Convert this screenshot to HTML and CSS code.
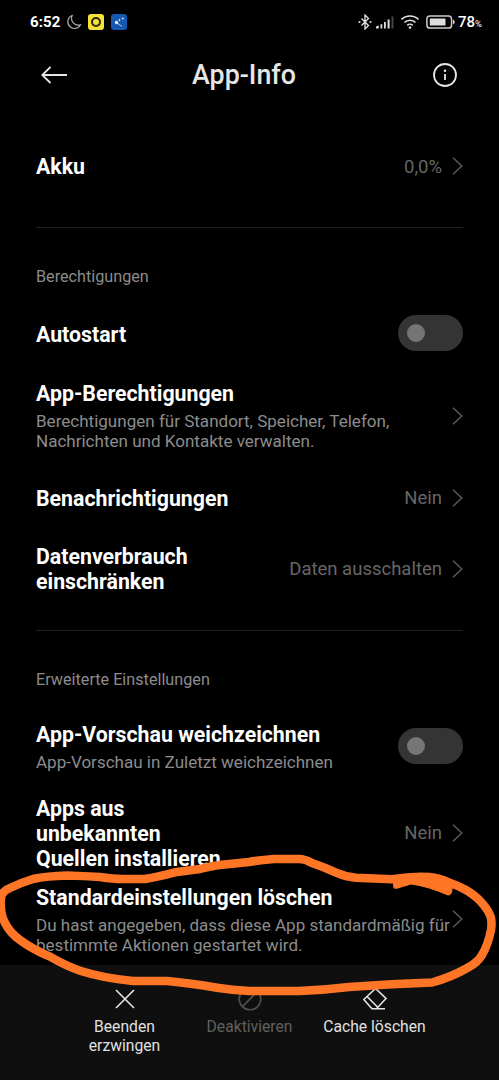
FILE: index.html
```
<!DOCTYPE html>
<html lang="de">
<head>
    <meta charset="UTF-8">
    <meta name="viewport" content="width=device-width, initial-scale=1.0">
    <title>App-Info</title>
    <link rel="stylesheet" href="styles.css">
</head>
<body>
    <div class="screen">
        <div class="status-bar">
            <span class="time">6:52</span>
            <svg class="moon" width="16" height="16" viewBox="0 0 16 16"><path d="M6.200 1.500A6.700 6.700 0 1 0 14.500 10.800 6.800 6.800 0 0 1 6.200 1.500Z"/></svg>
            <span class="app-badge yellow"></span>
            <span class="app-badge blue">
                <svg width="16" height="16" viewBox="0 0 16 16"><circle cx="5.500" cy="8.500" r="1.300"/><circle cx="8.500" cy="6" r=".6"/><circle cx="11.800" cy="4.500" r=".6"/><path d="M6 9l5 3.500"/></svg>
            </span>
            <div class="status-right">
                <svg class="line" width="14" height="16" viewBox="0 0 14 16"><path d="M3.500 4.500l7 7L7 15V1l3.500 3.500-7 7"/><circle class="fill" cx="1.500" cy="8" r="1.100"/><circle class="fill" cx="12.500" cy="8" r="1.100"/></svg>
                <svg class="signal" width="18" height="14" viewBox="0 0 18 14"><path d="M0 11.500l2.800-1v3H0zM4.500 9.200h1.800v4.300H4.500zM8 7h1.800v6.500H8zM11.600 4.500h2v9h-2z"/><path class="off" d="M15.500 1.500h2v12h-2z"/></svg>
                <svg class="line wifi" width="20" height="16" viewBox="0 0 20 16"><path d="M1.500 5.500a12 12 0 0 1 17 0M4.500 8.500a7.800 7.800 0 0 1 11 0M7.300 11.300a3.900 3.900 0 0 1 5.400 0"/><circle class="fill" cx="10" cy="13.600" r="1.300"/></svg>
                <svg class="battery" width="29" height="14" viewBox="0 0 29 14"><rect class="shell" x=".9" y=".9" width="24.700" height="12.200" rx="3.200"/><rect x="3.800" y="3.600" width="15.700" height="6.800" rx=".5"/><path d="M27 4.800q1.700.3 1.700 2.200T27 9.200z"/></svg>
                <span class="percent">78<small>%</small></span>
            </div>
        </div>

        <header class="header">
            <svg class="back" width="26" height="18" viewBox="0 0 26 18"><path d="M9.500 1L1.200 9l8.300 8M1.200 9H26"/></svg>
            <h1>App-Info</h1>
            <svg class="info" width="24" height="24" viewBox="0 0 24 24"><circle cx="12" cy="12" r="11"/><path d="M12 11v6"/><circle class="dot" cx="12" cy="7.800" r="1.300"/></svg>
        </header>

        <main class="content">
            <div class="row battery-row">
                <h2>Akku</h2>
                <span class="value">0,0%</span>
                <svg class="chevron" width="11" height="18" viewBox="0 0 11 18"><path d="M1 .8L9.800 9 1 17.200"/></svg>
            </div>

            <section>
                <p class="label">Berechtigungen</p>
                <div class="row">
                    <h2>Autostart</h2>
                    <span class="toggle"></span>
                </div>
                <div class="row detail">
                    <div class="text">
                        <h2>App-Berechtigungen</h2>
                        <p>Berechtigungen für Standort, Speicher, Telefon,<br>Nachrichten und Kontakte verwalten.</p>
                    </div>
                    <svg class="chevron" width="11" height="18" viewBox="0 0 11 18"><path d="M1 .8L9.800 9 1 17.200"/></svg>
                </div>
                <div class="row">
                    <h2>Benachrichtigungen</h2>
                    <span class="value">Nein</span>
                    <svg class="chevron" width="11" height="18" viewBox="0 0 11 18"><path d="M1 .8L9.800 9 1 17.200"/></svg>
                </div>
                <div class="row data">
                    <h2>Datenverbrauch<br>einschränken</h2>
                    <span class="value">Daten ausschalten</span>
                    <svg class="chevron" width="11" height="18" viewBox="0 0 11 18"><path d="M1 .8L9.800 9 1 17.200"/></svg>
                </div>
            </section>

            <section>
                <p class="label">Erweiterte Einstellungen</p>
                <div class="row preview">
                    <div class="text">
                        <h2>App-Vorschau weichzeichnen</h2>
                        <p>App-Vorschau in Zuletzt weichzeichnen</p>
                    </div>
                    <span class="toggle"></span>
                </div>
                <div class="row sources">
                    <h2>Apps aus<br>unbekannten<br>Quellen installieren</h2>
                    <span class="value">Nein</span>
                    <svg class="chevron" width="11" height="18" viewBox="0 0 11 18"><path d="M1 .8L9.800 9 1 17.200"/></svg>
                </div>
                <div class="row defaults">
                    <div class="text">
                        <h2>Standardeinstellungen löschen</h2>
                        <p>Du hast angegeben, dass diese App standardmäßig für<br>bestimmte Aktionen gestartet wird.</p>
                    </div>
                    <svg class="chevron" width="11" height="18" viewBox="0 0 11 18"><path d="M1 .8L9.800 9 1 17.200"/></svg>
                </div>
            </section>
        </main>

        <nav class="actions">
            <div class="action">
                <svg width="24" height="24" viewBox="0 0 24 24"><path d="M3 3l18 18M21 3L3 21"/></svg>
                <span>Beenden<br>erzwingen</span>
            </div>
            <div class="action disabled">
                <svg width="24" height="24" viewBox="0 0 24 24"><circle cx="12" cy="12" r="10.800"/><path d="M4.400 19.600L19.600 4.400"/></svg>
                <span>Deaktivieren</span>
            </div>
            <div class="action">
                <svg width="24" height="24" viewBox="0 0 24 24"><path d="M12.500 1.500L23 11.500 13.500 21.700H9L.8 12.500zM4 9.500l11 11M8.500 21.700H22"/></svg>
                <span>Cache löschen</span>
            </div>
        </nav>

        <!-- hand-drawn marker -->
        <svg class="marker" width="499" height="1080" viewBox="0 0 499 1080">
            <path d="M10 888Q20 883 33 879Q47 876 67 875.500Q85 876 100 877Q113 879 123 879H145Q157 877 175 872.300L200 869Q212 866 220 865Q240 863 249 862Q260 860 274 859H299Q305 859 312 863Q324 867 336 872.700Q346 877 356 877.700L392 879.300Q412 876 429 877Q440 878 449 882.500Q459 886 466 890Q476 896 482 903Q489 911 491 918Q492 924 491 930Q488 945 482 955Q478 962 469 967Q452 977 432 982.500L392 984.300L349 987Q325 990 299 991H249Q232 990 217 987.700Q190 983 167 981H133Q103 978 80 970.700Q66 966 50 956.700Q32 949 20 940Q10 933 5 923Q1 915 1 908Q0 901 1.700 895Q4 890 10 888"/>
            <path class="blob" d="M393 880L394 888Q397 889 401 887L411 884Q427 886 448 895Q452 895 452 889L451 883L429 877Z"/>
        </svg>
    </div>
</body>
</html>
```
FILE: styles.css
```
*,
*::before {
    margin: 0;
    padding: 0;
    box-sizing: border-box;
}

body {
    background-color: #000;
    color: #fff;
    font-family: Roboto, 'Liberation Sans', sans-serif;
}

svg {
    display: block;
    flex-shrink: 0;
    fill: none;
    stroke: #e6e6e6;
    stroke-width: 1.6;
}

.screen {
    position: relative;
    width: 499px;
    height: 1080px;
    overflow: hidden;
    display: flex;
    flex-direction: column;
}

.status-bar {
    height: 43px;
    padding: 0 17px 0 30px;
    display: flex;
    align-items: center;
}

.time {
    width: 36px;
    font-size: 15px;
    font-weight: 700;
    letter-spacing: 0.1px;
}

.moon {
    stroke: #aaa;
    stroke-width: 1.2;
}

.app-badge {
    width: 16px;
    height: 16px;
    border-radius: 3px;
    margin-left: 6px;
}

.yellow {
    background-color: #f6e335;
    display: flex;
    align-items: center;
    justify-content: center;
}

.yellow::before {
    content: "";
    width: 10px;
    height: 10px;
    border: 2px solid #28230a;
    border-radius: 50%;
}

.blue {
    background-color: #1458b0;
    margin-left: 7px;
}

.blue svg {
    fill: #fff;
    stroke: #fff;
    stroke-width: 0.7;
}

.status-right {
    margin-left: auto;
    display: flex;
    align-items: center;
}

.line {
    stroke-width: 1.3;
}

.line .fill,
.signal,
.battery {
    fill: #ddd;
    stroke: none;
}

.signal {
    margin-left: 4px;
}

.signal .off {
    fill: #444;
}

.line.wifi {
    margin-left: 6px;
    stroke-width: 1.6;
}

.battery {
    margin-left: 6px;
}

.battery .shell {
    fill: none;
    stroke: #ccc;
    stroke-width: 1.5;
}

.percent {
    margin-left: 3px;
    font-size: 15px;
    font-weight: 500;
}

.percent small {
    font-size: 9.5px;
    font-weight: 400;
}

.header {
    height: 64px;
    padding: 0 42px 0 41px;
    display: flex;
    align-items: center;
}

.back,
.info {
    stroke-width: 1.8;
}

.info .dot {
    fill: #e6e6e6;
    stroke: none;
}

h1 {
    flex: 1;
    padding-right: 12px;
    font-size: 26.8px;
    font-weight: 500;
    text-align: center;
    color: #e6e6e6;
}

.content {
    flex: 1;
    padding: 0 35px 0 36px;
}

.row {
    height: 58px;
    display: flex;
    align-items: center;
}

.battery-row {
    height: 119px;
    padding-right: 1px;
}

.battery-row .chevron {
    margin-bottom: 2px;
}

section {
    border-top: 1px solid #1f1f1f;
    margin: 1px 1px 0 0;
}

.label {
    height: 77px;
    padding-top: 39px;
    font-size: 16.2px;
    line-height: 20px;
    color: #8c8c8c;
}

h2 {
    font-size: 21.3px;
    line-height: 25px;
    font-weight: 700;
}

.text p {
    margin-top: 5px;
    font-size: 17.05px;
    line-height: 20px;
    color: #8c8c8c;
    white-space: nowrap;
}

.text {
    width: 0;
    flex: 1;
}

.text h2 {
    white-space: nowrap;
}

.value {
    margin-left: auto;
    font-size: 18.5px;
    color: #666;
}

.chevron {
    margin: 0 0 1px 10px;
    stroke: #5c5c5c;
    stroke-width: 1.4;
}

.toggle {
    width: 65px;
    height: 36px;
    margin: 0 0 2px auto;
    padding-left: 9px;
    border-radius: 18px;
    background-color: #343434;
    display: flex;
    align-items: center;
}

.toggle::before {
    content: "";
    width: 18px;
    height: 18px;
    border-radius: 50%;
    background-color: #757575;
}

.detail {
    height: 106px;
}

.data {
    height: 84px;
    margin-bottom: 19px;
}

.preview {
    height: 78px;
}

.sources {
    height: 94px;
}

.defaults {
    height: 79px;
}

.defaults .chevron {
    margin-bottom: 2px;
}

.actions {
    height: 115px;
    padding: 22px 62px 0;
    background-color: #0f0f0f;
    display: flex;
}

.action {
    flex: 1;
    display: flex;
    flex-direction: column;
    align-items: center;
    gap: 7px;
    font-size: 15.7px;
    line-height: 18.500px;
    text-align: center;
    color: #e0e0e0;
}

.disabled {
    color: #606060;
}

.disabled svg {
    stroke: #505050;
}

.marker {
    position: absolute;
    top: 0;
    left: 0;
    stroke: #ff7526;
    stroke-width: 8.5;
    stroke-linecap: round;
    stroke-linejoin: round;
}

.marker .blob {
    fill: #ff7526;
    stroke-width: 1;
}
```
